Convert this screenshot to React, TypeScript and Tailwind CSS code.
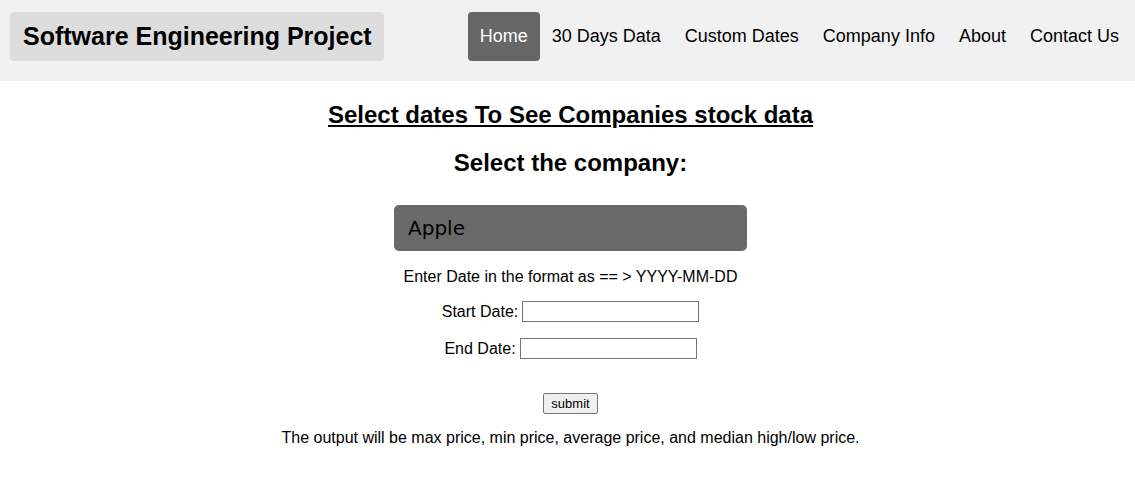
import React from "react";

export default function App() {
  const links = ["30 Days Data", "Custom Dates", "Company Info", "About", "Contact Us"];
  return (
    <div className="min-h-[481px] bg-white text-black" style={{ fontFamily: '"Liberation Sans", Arial, sans-serif' }}>
      <header className="flex items-start justify-between bg-[#f1f1f1] pl-[10px] pr-[4px] pt-[12px] pb-[20px]">
        <div className="flex h-[49px] items-center rounded-[4px] bg-[#dddddd] pl-[13px] pr-[12px] text-[25px] font-bold">
          Software Engineering Project
        </div>
        <nav className="flex h-[49px] items-stretch text-[18px]">
          <a className="flex items-center rounded-[4px] bg-[#666666] px-[12px] text-white">Home</a>
          {links.map((l) => (
            <a key={l} className="flex items-center px-[12px] text-black">
              {l}
            </a>
          ))}
        </nav>
      </header>
      <main className="flex flex-col items-center pl-[6px]">
        <h2 className="mt-[20px] text-[24px] font-bold leading-[28px] underline">
          Select dates To See Companies stock data
        </h2>
        <h2 className="mt-[20px] text-[24px] font-bold leading-[28px]">Select the company:</h2>
        <div
          className="mt-[28px] flex h-[46px] w-[353px] items-center rounded-[5px] bg-[#696969] px-[14px] text-[20px] text-black"
          style={{ fontFamily: '"Comic Sans MS", "DejaVu Sans", sans-serif' }}
        >
          Apple
        </div>
        <p className="mt-[17px] text-[16px] leading-[18px]">Enter Date in the format as == &gt; YYYY-MM-DD</p>
        <div className="mt-[15px] flex h-[21px] items-center text-[16px]">
          <span className="mr-[4px] leading-[18px]">Start Date:</span>
          <input className="h-[21px] w-[177px] border border-[#767676] bg-white" />
        </div>
        <div className="mt-[16px] flex h-[21px] items-center text-[16px]">
          <span className="mr-[4px] leading-[18px]">End Date:</span>
          <input className="h-[21px] w-[177px] border border-[#767676] bg-white" />
        </div>
        <button className="mt-[34px] h-[21px] rounded-[2px] border border-[#767676] bg-[#efefef] px-[7px] text-[13px] leading-none">
          submit
        </button>
        <p className="mt-[15px] text-[16px] leading-[18px]">
          The output will be max price, min price, average price, and median high/low price.
        </p>
      </main>
    </div>
  );
}
